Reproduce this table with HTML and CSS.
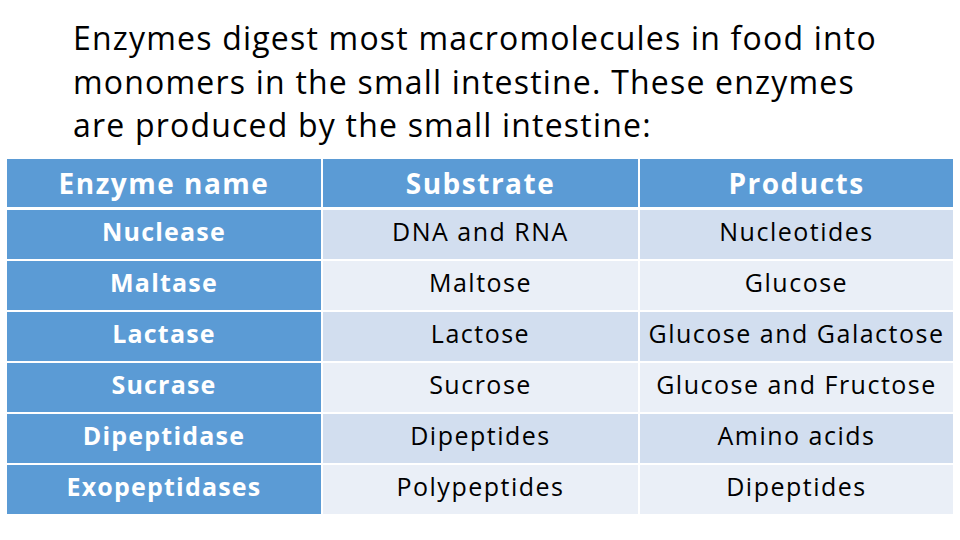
FILE: index.html
```html
<!DOCTYPE html>
<html>
<head>
<meta charset="utf-8">
<link rel="stylesheet" href="styles.css">
</head>
<body>
<div class="slide">
  <h1 class="title">Enzymes digest most macromolecules in food into<br>monomers in the small intestine. These enzymes<br>are produced by the small intestine:</h1>
  <div class="table">
    <div class="row head">
      <div class="cell">Enzyme name</div>
      <div class="cell">Substrate</div>
      <div class="cell">Products</div>
    </div>
    <div class="row odd">
      <div class="cell name">Nuclease</div>
      <div class="cell">DNA and RNA</div>
      <div class="cell">Nucleotides</div>
    </div>
    <div class="row even">
      <div class="cell name">Maltase</div>
      <div class="cell">Maltose</div>
      <div class="cell">Glucose</div>
    </div>
    <div class="row odd">
      <div class="cell name">Lactase</div>
      <div class="cell">Lactose</div>
      <div class="cell">Glucose and Galactose</div>
    </div>
    <div class="row even">
      <div class="cell name">Sucrase</div>
      <div class="cell">Sucrose</div>
      <div class="cell">Glucose and Fructose</div>
    </div>
    <div class="row odd">
      <div class="cell name">Dipeptidase</div>
      <div class="cell">Dipeptides</div>
      <div class="cell">Amino acids</div>
    </div>
    <div class="row even">
      <div class="cell name">Exopeptidases</div>
      <div class="cell">Polypeptides</div>
      <div class="cell">Dipeptides</div>
    </div>
  </div>
</div>
</body>
</html>
```
FILE: styles.css
```css
html, body {
  margin: 0;
  padding: 0;
  background: #ffffff;
}
.slide {
  width: 960px;
  height: 540px;
  overflow: hidden;
  font-family: "Open Sans", Lato, sans-serif;
  font-variant-ligatures: none;
  color: #000;
}
.title {
  margin: 0;
  padding: 16px 0 0 73px;
  font-size: 32px;
  font-weight: 400;
  letter-spacing: 1.2px;
  line-height: 43.5px;
  height: 143px;
  box-sizing: border-box;
}
.table {
  margin: 16px 0 0 7px;
  width: 946px;
  display: flex;
  flex-direction: column;
  gap: 2px;
}
.row {
  display: grid;
  grid-template-columns: 314px 315px 313px;
  column-gap: 2px;
  height: 49px;
}
.row.head {
  height: 48px;
  margin-bottom: 1px;
}
.cell {
  display: flex;
  align-items: center;
  justify-content: center;
  font-size: 25px;
  letter-spacing: 1.5px;
  padding-bottom: 8px;
  box-sizing: border-box;
  white-space: nowrap;
}
.head .cell {
  background: #5b9bd5;
  color: #fff;
  font-weight: 700;
  font-size: 28px;
  letter-spacing: 1.5px;
  padding-bottom: 0;
}
.odd .cell { background: #d2deef; }
.even .cell { background: #eaeff7; }
.row .cell.name {
  background: #5b9bd5;
  color: #fff;
  font-weight: 700;
  letter-spacing: 1.2px;
}
```
